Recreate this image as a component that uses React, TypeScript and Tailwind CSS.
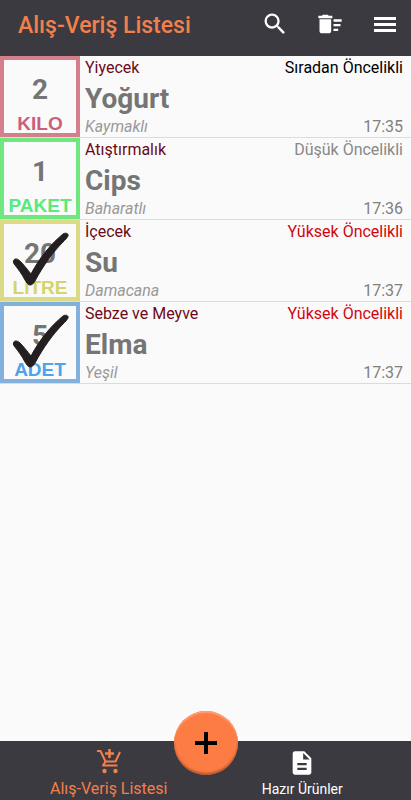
import { useState } from "react";
import { MdDeleteSweep, MdDescription, MdSearch } from "react-icons/md";

type Urun = {
  id: number;
  ad: string;
  kategori: string;
  aciklama: string;
  miktar: number;
  birim: string;
  oncelik: string;
  saat: string;
  alindi: boolean;
};

const URUNLER: Urun[] = [
  { id: 1, ad: "Yoğurt", kategori: "Yiyecek", aciklama: "Kaymaklı", miktar: 2, birim: "KILO", oncelik: "Sıradan", saat: "17:35", alindi: false },
  { id: 2, ad: "Cips", kategori: "Atıştırmalık", aciklama: "Baharatlı", miktar: 1, birim: "PAKET", oncelik: "Düşük", saat: "17:36", alindi: false },
  { id: 3, ad: "Su", kategori: "İçecek", aciklama: "Damacana", miktar: 20, birim: "LITRE", oncelik: "Yüksek", saat: "17:37", alindi: true },
  { id: 4, ad: "Elma", kategori: "Sebze ve Meyve", aciklama: "Yeşil", miktar: 5, birim: "ADET", oncelik: "Yüksek", saat: "17:37", alindi: true },
];

const getBirimColor = (birim: string) => {
  switch (birim) {
    case "KILO":
      return "border-[#d67f8c] text-[#cb5f7b]";
    case "PAKET":
      return "border-[#6ee87e] text-[#57ea7c]";
    case "LITRE":
      return "border-[#dbdb86] text-[#d3d56b]";
    default:
      return "border-[#82b1dd] text-[#4fa3ea]";
  }
};

const getOncelikColor = (oncelik: string) => {
  switch (oncelik) {
    case "Yüksek":
      return "text-[#d0060f]";
    case "Düşük":
      return "text-[#888888]";
    default:
      return "text-black";
  }
};

function Tik() {
  return (
    <svg className="absolute -inset-1 size-20" viewBox="0 0 80 80" aria-hidden="true">
      <path
        d="M14 40C15 38 18 39 20 41C24 45 27 49 31 54C40 37 51 24 63 14C66 12 69 14 68 16C67 18 65 20 63 22C53 32 43 46 35 61C33 64 32 65 30 65C28 65 27 63 25 60C22 54 18 49 15 45C13 43 13 41 14 40Z"
        fill="#231f20"
        stroke="#231f20"
        strokeLinejoin="round"
      />
    </svg>
  );
}

function SepetIcon() {
  return (
    <svg className="size-7" viewBox="0 0 28 28" fill="none" stroke="currentColor" strokeWidth={2} aria-hidden="true">
      <path d="M2 2h3.500l5 10.500h10l4.500-9.500" strokeLinejoin="round" />
      <path d="M10.500 12.500l-2.500 4h14.500" strokeLinejoin="round" />
      <path d="M14.500 0v9M10 4.500h9" strokeWidth={2.5} />
      <circle cx="9.500" cy="22" r="2.200" fill="currentColor" stroke="none" />
      <circle cx="20.500" cy="22" r="2.200" fill="currentColor" stroke="none" />
    </svg>
  );
}

export default function App() {
  const [urunler, setUrunler] = useState(URUNLER);

  const toggleAlindi = (id: number) =>
    setUrunler(urunler.map((u) => (u.id === id ? { ...u, alindi: !u.alindi } : u)));

  return (
    <div className="flex min-h-screen flex-col bg-[#fafafa] font-['Roboto',sans-serif]">
      {/* Header */}
      <header className="flex h-14 items-center justify-between bg-[#3b3a40] pr-3 pb-1 pl-[18px]">
        <h1 className="text-[23px] leading-6 font-medium text-[#f37f4b]">Alış-Veriş Listesi</h1>
        <div className="flex items-center gap-[27px] pb-1 text-white">
          <button type="button" aria-label="Ara">
            <MdSearch className="size-7" />
          </button>
          <button type="button" aria-label="Alınanları sil">
            <MdDeleteSweep className="size-7" />
          </button>
          <button type="button" aria-label="Menü">
            <svg className="size-7" viewBox="0 0 28 28" fill="currentColor" aria-hidden="true">
              <path d="M3 7h22v3H3zM3 13h22v3H3zM3 19h22v3H3z" />
            </svg>
          </button>
        </div>
      </header>

      {/* Liste */}
      <main className="flex-1">
        <ul>
          {urunler.map((urun) => (
            <li key={urun.id} className="flex border-b border-[#dcdcdc]">
              <label
                className={`relative flex h-[81px] w-20 shrink-0 flex-col items-center border-4 ${getBirimColor(urun.birim)}`}
              >
                <input
                  type="checkbox"
                  className="sr-only"
                  checked={urun.alindi}
                  onChange={() => toggleAlindi(urun.id)}
                />
                <span className="pt-3 text-[28px] leading-9 font-bold text-[#757575]">
                  {urun.miktar}
                </span>
                <span className="font-['Liberation_Sans',sans-serif] text-[19px] leading-8 font-bold">
                  {urun.birim}
                </span>
                {urun.alindi && <Tik />}
              </label>

              <div className="flex flex-1 flex-col justify-between pr-2 pl-[5px]">
                <div className="flex justify-between text-base leading-6">
                  <span className="text-[#6b0a18]">{urun.kategori}</span>
                  <span className={getOncelikColor(urun.oncelik)}>{urun.oncelik} Öncelikli</span>
                </div>
                <h2 className="text-[28px] leading-9 font-bold text-[#757575]">{urun.ad}</h2>
                <div className="flex justify-between text-base leading-5">
                  <span className="text-[#999999] italic">{urun.aciklama}</span>
                  <span className="text-[#808080]">{urun.saat}</span>
                </div>
              </div>
            </li>
          ))}
        </ul>
      </main>

      {/* Alt menü */}
      <nav className="relative grid h-[59px] grid-cols-2 bg-[#3b3a40]">
        <a href="#liste" className="flex flex-col items-center pt-2 pl-3 text-[#f37f4b]">
          <SepetIcon />
          <span className="text-base leading-6">Alış-Veriş Listesi</span>
        </a>
        <a href="#hazir" className="flex flex-col items-center pt-2 pr-3 text-white">
          <MdDescription className="size-7" />
          <span className="text-sm leading-6">Hazır Ürünler</span>
        </a>
        <button
          type="button"
          aria-label="Ürün ekle"
          className="absolute -top-[30px] left-1/2 flex size-16 -translate-x-1/2 items-center justify-center rounded-full bg-[#fc7c44] text-black shadow-[inset_0_2px_1px_#ff9d70,inset_0_-2px_2px_#b8582f]"
        >
          <svg className="size-6" viewBox="0 0 24 24" stroke="currentColor" strokeWidth={4} aria-hidden="true">
            <path d="M12 1v22M1 12h22" />
          </svg>
        </button>
      </nav>
    </div>
  );
}
